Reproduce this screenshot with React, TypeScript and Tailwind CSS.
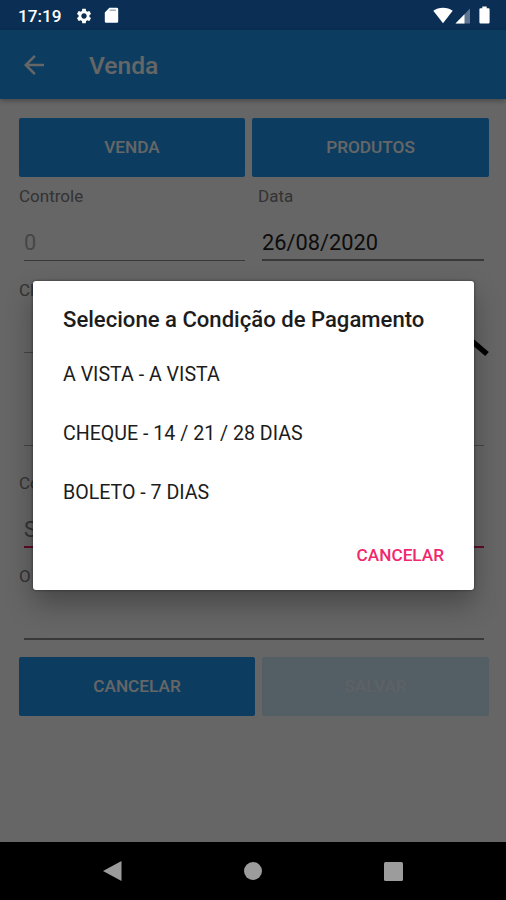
import type { ReactNode } from 'react';
import { MdArrowBack, MdSettings } from 'react-icons/md';

const conditions = ['A VISTA - A VISTA', 'CHEQUE - 14 / 21 / 28 DIAS', 'BOLETO - 7 DIAS'];

function StatusBar() {
  return (
    <div className="flex h-[30px] shrink-0 items-center bg-[#0a2e54] text-white">
      <span className="ml-[18px] w-[57px] text-[17.2px] font-medium leading-[30px] pt-[2px]">17:19</span>
      <MdSettings className="h-[18px] w-[18px] mt-px" />
      <svg className="ml-[11px] mt-px h-[17px] w-[15px]" viewBox="0 0 15 17">
        <path d="M5.4 0.8h7.4a1.4 1.4 0 0 1 1.4 1.4v12.2a1.4 1.4 0 0 1-1.4 1.4H2.2a1.4 1.4 0 0 1-1.4-1.4V5.6z" fill="currentColor" />
        <path d="M5.6 3.2h6.4" stroke="#9aa7b8" strokeWidth="1.4" />
      </svg>
      <svg className="ml-auto h-[17px] w-[20px]" viewBox="0 0 20 17">
        <path d="M10 16.2L0.3 3.8C3 1.8 6.2 0.8 10 0.8s7 1 9.7 3z" fill="currentColor" />
      </svg>
      <svg className="ml-[2px] mt-px h-[16px] w-[16px]" viewBox="0 0 16 16">
        <path d="M15 0.5v15H0.5z" fill="#5d7590" />
        <path d="M9.5 6.2v9.3H0.5z" fill="currentColor" />
      </svg>
      <svg className="ml-[7.5px] mr-[16.5px] h-[18px] w-[11px]" viewBox="0 0 11 18">
        <path d="M3.3 0.5h4.4v1.7h1.9a1 1 0 0 1 1 1v13a1.2 1.2 0 0 1-1.2 1.2H1.6a1.2 1.2 0 0 1-1.2-1.2v-13a1 1 0 0 1 1-1h1.9z" fill="currentColor" />
      </svg>
    </div>
  );
}

function Label({ children }: { children: ReactNode }) {
  return <div className="h-[20px] text-[17px] leading-[20px] text-[#808080]">{children}</div>;
}

function FormButton({ children, className }: { children: ReactNode; className: string }) {
  return (
    <button className={`h-[59px] rounded-[2px] text-[17.2px] font-medium ${className}`}>{children}</button>
  );
}

function SaleForm() {
  return (
    <div className="flex flex-1 flex-col pl-[19px] pr-[17px] pt-[19px]">
      <div className="flex gap-[7px]">
        <FormButton className="w-[226px] bg-[#1e98f2] text-white">VENDA</FormButton>
        <FormButton className="flex-1 bg-[#1e98f2] text-white">PRODUTOS</FormButton>
      </div>

      <div className="mt-[9px] flex">
        <div className="w-[239px]">
          <Label>Controle</Label>
          <div className="ml-[5px] mr-[13px] mt-[22px] h-[33px] border-b border-[#8c8c8c] text-[21.8px] leading-[30px] text-[#b0b0b0]">0</div>
        </div>
        <div className="flex-1">
          <Label>Data</Label>
          <div className="ml-[4px] mr-[5px] mt-[22px] h-[33px] border-b-2 border-[#8c8c8c] text-[21.8px] leading-[30px] text-[#222]">26/08/2020</div>
        </div>
      </div>

      <div className="mt-[19px]">
        <Label>Cl</Label>
        <div className="ml-[5px] mr-[5px] flex h-[53px] justify-between">
          <div className="w-[390px] border-b border-[#aaa]" />
          <svg className="-mr-[6px] h-[58px] w-[58px] shrink-0" viewBox="0 0 58 58" fill="none" stroke="#000" strokeWidth="5.5">
            <circle cx="23" cy="23" r="16" />
            <path d="M34 36L55 54" />
          </svg>
        </div>
        <div className="ml-[5px] mr-[5px] h-[93px] border-b border-[#aaa]" />
      </div>

      <div className="mt-[27px]">
        <Label>Co</Label>
        <div className="ml-[5px] mr-[5px] mt-[21px] h-[34px] border-b-2 border-[#e91e63] text-[21.8px] leading-[31px] text-[#808080]">S</div>
      </div>

      <div className="mt-[18px]">
        <Label>O</Label>
        <div className="ml-[5px] mr-[5px] h-[54px] border-b-2 border-[#8c8c8c]" />
      </div>

      <div className="mt-[17px] flex gap-[7px]">
        <FormButton className="w-[236px] bg-[#1e98f2] text-white">CANCELAR</FormButton>
        <FormButton className="flex-1 bg-[#d2ecfc] text-[#e9f4fb]">SALVAR</FormButton>
      </div>
    </div>
  );
}

function PaymentDialog() {
  return (
    <div className="absolute left-[33px] top-[281px] flex h-[308.5px] w-[441px] flex-col rounded-[3px] bg-white px-[30px] shadow-[0_14px_28px_0_rgba(0,0,0,0.3),0_0_3px_rgba(0,0,0,0.5)]">
      <h2 className="mt-[23px] text-[22.1px] font-medium leading-[30px] text-[#1c1c1c] whitespace-nowrap">
        Selecione a Condição de Pagamento
      </h2>
      <ul className="mt-[11px]">
        {conditions.map((item) => (
          <li key={item} className="h-[59px] text-[19.6px] leading-[59px] text-[#1c1c1c] whitespace-nowrap">
            {item}
          </li>
        ))}
      </ul>
      <button className="mt-[23px] self-end text-[17.2px] font-medium leading-[20px] text-[#f0286e]">CANCELAR</button>
    </div>
  );
}

export default function App() {
  return (
    <div className="relative flex h-[900px] w-[506px] flex-col overflow-hidden bg-black font-['Roboto',sans-serif]">
      <StatusBar />

      <div className="relative flex flex-1 flex-col bg-white">
        <header className="flex h-[69px] shrink-0 items-center bg-[#1e98f2] text-white shadow-[0_2px_5px_rgba(0,0,0,0.3)]">
          <MdArrowBack className="ml-[19px] h-[30px] w-[30px]" />
          <h1 className="ml-[40px] mt-[2px] text-[24.6px] font-medium leading-[30px]">Venda</h1>
        </header>
        <SaleForm />
        <div className="absolute inset-0 bg-black/60" />
      </div>

      <nav className="flex h-[58px] shrink-0 items-center justify-between bg-black pl-[102px] pr-[103px]">
        <svg className="h-[22px] w-[20px]" viewBox="0 0 20 22">
          <path d="M19.5 1v20L1 11z" fill="#9c9c9c" />
        </svg>
        <div className="h-[18px] w-[18px] rounded-full bg-[#9c9c9c]" />
        <div className="h-[19px] w-[19px] rounded-[1.5px] bg-[#9c9c9c]" />
      </nav>

      <PaymentDialog />
    </div>
  );
}
